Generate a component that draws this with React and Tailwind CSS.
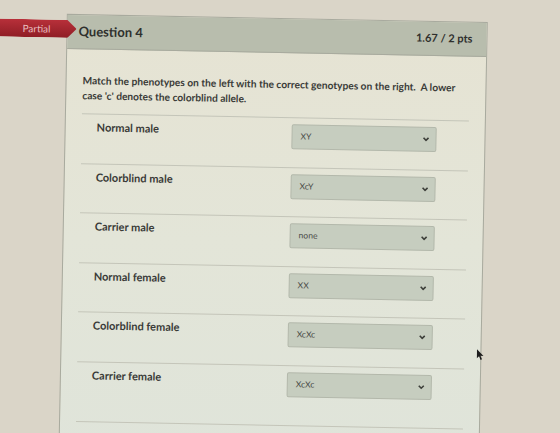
import React from 'react';

const rows = [
  { label: 'Normal male', value: 'XY' },
  { label: 'Colorblind male', value: 'XcY' },
  { label: 'Carrier male', value: 'none' },
  { label: 'Normal female', value: 'XX' },
  { label: 'Colorblind female', value: 'XcXc' },
  { label: 'Carrier female', value: 'XcXc' },
];

const Chevron = () => (
  <svg width="7" height="5" viewBox="0 0 7 5" className="text-[#3d3f3a]">
    <path d="M1 1l2.5 2.5L6 1" fill="none" stroke="currentColor" strokeWidth="1.6" />
  </svg>
);

const MatchRow = ({ label, value, last }) => (
  <div className={`flex items-start border-t border-[#c4c5b9] ${last ? 'h-[60px]' : 'h-[49.5px]'}`}>
    <div className="w-[210px] pl-[15px] pt-[5px] text-[11px] font-bold text-[#3a3b38]">{label}</div>
    <div className="mt-[6px] flex h-[25px] w-[145px] items-center justify-between rounded-[2px] border border-[#b3b8ab] bg-[#c6cdbf] pl-[8px] pr-[6px]">
      <span className="text-[8.5px] text-[#484a46]">{value}</span>
      <Chevron />
    </div>
  </div>
);

export default function App() {
  return (
    <div className="relative h-[433px] w-[560px] overflow-hidden bg-[#dad5c8] font-['Lato','Open_Sans',sans-serif]">
      <div className="relative h-full w-full origin-center rotate-[1.1deg]">
        <div className="absolute left-[-4px] top-[24px] z-10 flex h-[18px] w-[77px] items-center bg-gradient-to-b from-[#b8303a] to-[#8f1d25] pl-[23px] text-[10px] text-[#e9bfc0] [clip-path:polygon(0_0,88%_0,100%_50%,88%_100%,0_100%)]">
          Partial
        </div>

        <div className="ml-[63px] w-[421px] pt-[18px]">
          <div className="border border-[#a8aa9e] bg-gradient-to-b from-[#e6e3d3] via-[#e3e5d8] to-[#dfe4da]">
            <div className="flex h-[34px] items-center justify-between border-b border-[#a8aa9e] bg-[#b8bdad] pl-[11px] pr-[14px]">
              <span className="text-[13px] font-bold text-[#2f302d]">Question 4</span>
              <span className="text-[11px] font-bold text-[#2f302d]">1.67 / 2 pts</span>
            </div>
            <div className="px-[16px] pb-[40px] pt-[24px]">
              <p className="mb-[10px] text-[10.2px] font-bold leading-[15px] text-[#3a3b38]">
                Match the phenotypes on the left with the correct genotypes on the right.&nbsp; A lower case 'c' denotes the colorblind allele.
              </p>
              {rows.map((r, i) => (
                <MatchRow key={i} label={r.label} value={r.value} last={i === rows.length - 1} />
              ))}
              <div className="border-t border-[#c4c5b9]" />
            </div>
          </div>
        </div>

        {/* mouse pointer */}
        <svg className="absolute left-[479px] top-[345px]" width="8" height="12" viewBox="0 0 8 12">
          <path d="M0.5 0.5v9l2.2-2 1.6 3.5 1.4-.6-1.6-3.4h3z" fill="#1d1d1d" />
        </svg>
      </div>
    </div>
  );
}
